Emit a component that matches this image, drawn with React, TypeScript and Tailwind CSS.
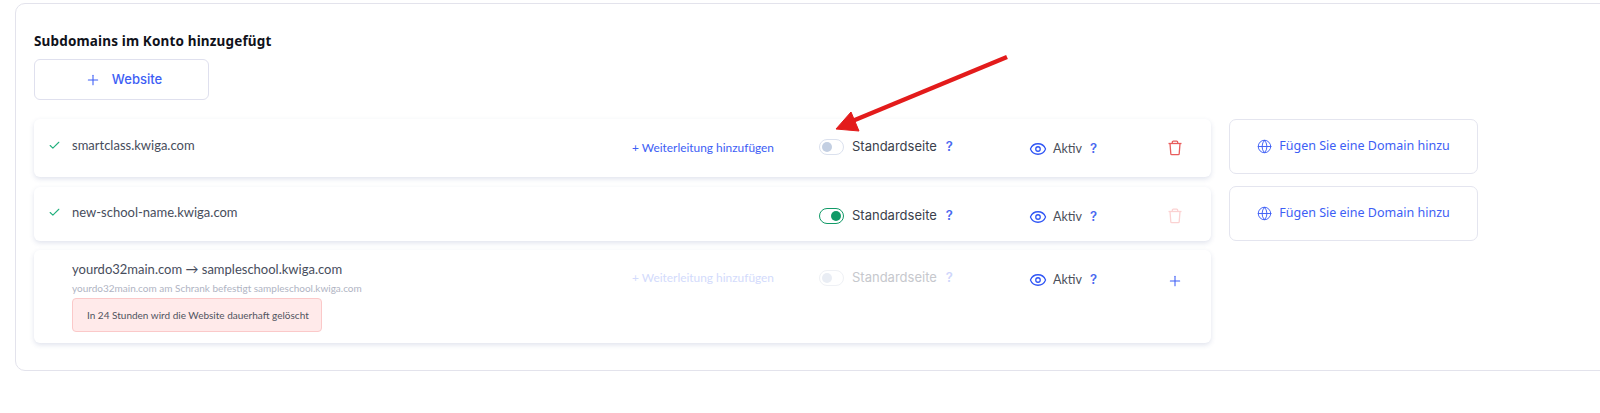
import { Check, Plus, Eye, Globe } from "lucide-react";
import type { ReactNode } from "react";

const inter = "font-['Inter',sans-serif]";
const lato = "font-['Lato',sans-serif]";

function Help({ dim, gap }: { dim?: boolean; gap: string }) {
  return <span className={`${inter} ${gap} text-[13px] font-semibold ${dim ? "text-[#cfd6fb]" : "text-[#4a69f0]"}`}>?</span>;
}

function Toggle({ state }: { state: "off" | "on" | "dim" }) {
  const border = state === "on" ? "border-[#119a67]" : state === "off" ? "border-[#dbe1ee]" : "border-[#eff1f5]";
  const dot = state === "on" ? "bg-[#119a67]" : state === "off" ? "bg-[#c3cfe2]" : "bg-[#e9edf4]";
  return (
    <span className={`w-[25px] h-[16px] rounded-full border ${border} flex items-center px-[2px] ${state === "on" ? "justify-end" : "justify-start"}`}>
      <span className={`w-[10px] h-[10px] rounded-full ${dot}`} />
    </span>
  );
}

function Trash({ dim }: { dim: boolean }) {
  return (
    <svg width="16" height="16" viewBox="0 0 16 16" fill="none" stroke={dim ? "#fbd2d2" : "#e85c5c"} strokeWidth="1.3" strokeLinejoin="round">
      <path d="M1.5 3.5h13" />
      <path d="M5.3 3.5V2.2c0-.6.4-1 1-1h3.4c.6 0 1 .4 1 1v1.3" />
      <path d="M3 3.5l.8 10.2c0 .6.5 1 1 1h6.4c.5 0 1-.4 1-1L13 3.5" />
    </svg>
  );
}

type RowProps = {
  box: string;
  title: string;
  check?: boolean;
  forward: "on" | "off" | "dim";
  toggle: "on" | "off" | "dim";
  last: "del" | "deldim" | "plus";
  fwdY: string;
  toggleY: string;
  aktivY: string;
  lastY: string;
  children?: ReactNode;
};

function Row({ box, title, check, forward, toggle, last, fwdY, toggleY, aktivY, lastY, children }: RowProps) {
  return (
    <div className={`${box} w-[1177px] bg-white rounded-[6px] shadow-[0_2px_5px_rgba(60,80,140,0.16)] flex items-start`}>
      <div className="w-[38px] pl-[14px] pt-[3px] shrink-0">
        {check && <Check className="w-[13px] h-[13px] text-[#22b07d]" strokeWidth={2} />}
      </div>
      <div className="w-[560px] shrink-0">
        <div className={`${lato} text-[13px] leading-[18px] text-[#474d5c]`}>{title}</div>
        {children}
      </div>
      <div className={`${lato} ${fwdY} w-[187px] shrink-0 text-[11.9px] leading-[18px] ${forward === "on" ? "text-[#3d5ef5]" : "text-[#d3dbfc]"} ${forward === "off" ? "invisible" : ""}`}>
        + Weiterleitung hinzufügen
      </div>
      <div className={`${toggleY} w-[210px] shrink-0 flex items-center h-[18px]`}>
        <Toggle state={toggle} />
        <span className={`${inter} text-[13px] ml-[8px] ${toggle === "dim" ? "text-[#c6c8cd]" : "text-[#3a3f4b]"}`}>Standardseite</span>
        <Help dim={toggle === "dim"} gap="ml-[9px]" />
      </div>
      <div className={`${aktivY} w-[136px] shrink-0 flex items-center h-[18px]`}>
        <Eye className="w-[18px] h-[18px] text-[#2f55f5]" strokeWidth={1.7} />
        <span className={`${lato} text-[12.5px] ml-[6px] text-[#4a4f5a]`}>Aktiv</span>
        <Help gap="ml-[8px]" />
      </div>
      <div className={`${lastY} w-[20px] shrink-0 h-[18px] flex items-center justify-center`}>
        {last === "plus" ? <Plus className="w-[16px] h-[16px] text-[#3d5ef5]" strokeWidth={1.6} /> : <Trash dim={last === "deldim"} />}
      </div>
    </div>
  );
}

function DomainButton() {
  return (
    <div className="h-[55px] w-[249px] border border-[#e4e5ef] rounded-[7px] bg-white flex items-center justify-center">
      <Globe className="w-[15px] h-[15px] text-[#3d5ef5]" strokeWidth={1.5} />
      <span className="font-['Noto_Sans',sans-serif] text-[12.5px] text-[#3d5ef5] ml-[7px]">Fügen Sie eine Domain hinzu</span>
    </div>
  );
}

export default function App() {
  return (
    <div className="relative w-[1600px] h-[413px] bg-white overflow-hidden">
      <div className="ml-[15px] mt-[3px] w-[1600px] h-[368px] border border-[#e3e3ec] rounded-[10px] pl-[18px] pt-[27px]">
        <h2 className="font-['Noto_Sans',sans-serif] font-bold text-[13.5px] tracking-[0.15px] leading-[20px] text-[#10121a]">Subdomains im Konto hinzugefügt</h2>
        <div className="mt-[8px] w-[175px] h-[41px] border border-[#dfe0ee] rounded-[6px] flex items-center justify-center pl-[4px]">
          <Plus className="w-[16px] h-[16px] text-[#3d5ef5]" strokeWidth={1.6} />
          <span className={`${inter} font-medium text-[13px] text-[#3d5ef5] ml-[11px]`}>Website</span>
        </div>
        <div className="mt-[19px] flex gap-[18px]">
          <div className="flex flex-col">
            <Row box="h-[58px] pt-[17px]" title="smartclass.kwiga.com" check forward="on" toggle="off" last="del"
              fwdY="pt-[3px]" toggleY="mt-[2px]" aktivY="mt-[4px]" lastY="mt-[3px]" />
            <Row box="h-[54px] mt-[10px] pt-[16px]" title="new-school-name.kwiga.com" check forward="off" toggle="on" last="deldim"
              fwdY="pt-[3px]" toggleY="mt-[4px]" aktivY="mt-[5px]" lastY="mt-[4px]" />
            <Row box="h-[93px] mt-[9px] pt-[10px]" title="yourdo32main.com → sampleschool.kwiga.com" forward="dim" toggle="dim" last="plus"
              fwdY="pt-[9px]" toggleY="mt-[9px]" aktivY="mt-[11px]" lastY="mt-[12px]">
              <div className={`${lato} text-[10px] leading-[14px] mt-[3px] text-[#b0b4c3]`}>yourdo32main.com am Schrank befestigt sampleschool.kwiga.com</div>
              <div className={`${lato} mt-[3px] w-[250px] h-[34px] rounded-[4px] border border-[#fbc9c9] bg-[#ffeaea] flex items-center pl-[14px] text-[10px] text-[#50535e]`}>
                In 24 Stunden wird die Website dauerhaft gelöscht
              </div>
            </Row>
          </div>
          <div className="flex flex-col gap-[12px]">
            <DomainButton />
            <DomainButton />
          </div>
        </div>
      </div>
      <svg className="absolute left-0 top-0 pointer-events-none" width="1600" height="413" viewBox="0 0 1600 413">
        <path d="M1007 57 L850 122" stroke="#e31b1b" strokeWidth="4.5" fill="none" />
        <path d="M836 129 L851 112 L859 131 Z" fill="#e31b1b" stroke="#e31b1b" strokeWidth="1" />
      </svg>
    </div>
  );
}
